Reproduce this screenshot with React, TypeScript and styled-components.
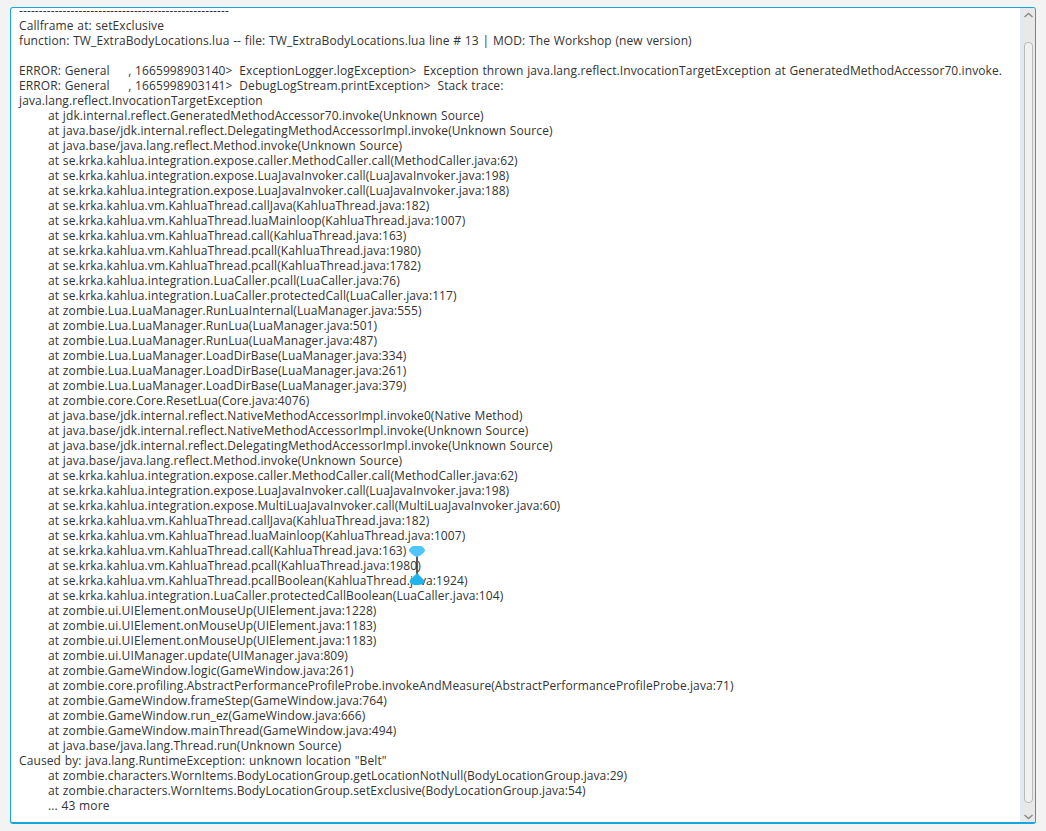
import styled, { createGlobalStyle } from "styled-components";

const GlobalStyle = createGlobalStyle`
  html, body {
    margin: 0;
    padding: 0;
    background: #f3f3f3;
  }
`;

const Page = styled.div`
  width: 1046px;
  height: 831px;
  padding: 7px 10px 7px 10px;
  box-sizing: border-box;
  overflow: hidden;
`;

const Panel = styled.div`
  position: relative;
  display: flex;
  height: 100%;
  box-sizing: border-box;
  border: 1px solid #16a5dc;
  border-bottom-width: 2px;
  border-radius: 3px;
  background: #fff;
  overflow: hidden;
`;

const LogArea = styled.div`
  flex: 1;
  min-width: 0;
  overflow: hidden;
  padding: 0 0 0 8px;
  border-right: 2px solid #d8eef8;
  font-family: "Open Sans", "Noto Sans", sans-serif;
  font-size: 12px;
  letter-spacing: 0.1px;
  word-spacing: 0.5px;
  line-height: 15px;
  color: #333;
`;

const Line = styled.div<{ $indent?: boolean; $first?: boolean }>`
  height: 15px;
  white-space: pre;
  padding-left: ${(p) => (p.$indent ? "29px" : "0")};
  margin-top: ${(p) => (p.$first ? "-5px" : "0")};
`;

const Gt = styled.span`
  margin-right: 3px;
`;

const ScrollBar = styled.div`
  width: 13px;
  flex-shrink: 0;
  display: flex;
  flex-direction: column;
  align-items: center;
  background: #e8e8e8;
`;

const Arrow = styled.svg<{ $height: number }>`
  width: 13px;
  height: ${(p) => p.$height}px;
  flex-shrink: 0;
`;

const Thumb = styled.div`
  flex: 1;
  width: 9px;
  box-sizing: border-box;
  border: 1px solid #b9b9b9;
  border-radius: 4px;
  background: #f1f1f1;
`;

const Handle = styled.svg`
  position: absolute;
  left: 396px;
  top: 537px;
  width: 20px;
  height: 44px;
`;

const lines: [string, boolean?][] = [
  ["-----------------------------------------------------"],
  ["Callframe at: setExclusive"],
  ["function: TW_ExtraBodyLocations.lua -- file: TW_ExtraBodyLocations.lua line # 13 | MOD: The Workshop (new version)"],
  [""],
  ["ERROR: General     , 1665998903140> ExceptionLogger.logException> Exception thrown java.lang.reflect.InvocationTargetException at GeneratedMethodAccessor70.invoke."],
  ["ERROR: General     , 1665998903141> DebugLogStream.printException> Stack trace:"],
  ["java.lang.reflect.InvocationTargetException"],
  ["at jdk.internal.reflect.GeneratedMethodAccessor70.invoke(Unknown Source)", true],
  ["at java.base/jdk.internal.reflect.DelegatingMethodAccessorImpl.invoke(Unknown Source)", true],
  ["at java.base/java.lang.reflect.Method.invoke(Unknown Source)", true],
  ["at se.krka.kahlua.integration.expose.caller.MethodCaller.call(MethodCaller.java:62)", true],
  ["at se.krka.kahlua.integration.expose.LuaJavaInvoker.call(LuaJavaInvoker.java:198)", true],
  ["at se.krka.kahlua.integration.expose.LuaJavaInvoker.call(LuaJavaInvoker.java:188)", true],
  ["at se.krka.kahlua.vm.KahluaThread.callJava(KahluaThread.java:182)", true],
  ["at se.krka.kahlua.vm.KahluaThread.luaMainloop(KahluaThread.java:1007)", true],
  ["at se.krka.kahlua.vm.KahluaThread.call(KahluaThread.java:163)", true],
  ["at se.krka.kahlua.vm.KahluaThread.pcall(KahluaThread.java:1980)", true],
  ["at se.krka.kahlua.vm.KahluaThread.pcall(KahluaThread.java:1782)", true],
  ["at se.krka.kahlua.integration.LuaCaller.pcall(LuaCaller.java:76)", true],
  ["at se.krka.kahlua.integration.LuaCaller.protectedCall(LuaCaller.java:117)", true],
  ["at zombie.Lua.LuaManager.RunLuaInternal(LuaManager.java:555)", true],
  ["at zombie.Lua.LuaManager.RunLua(LuaManager.java:501)", true],
  ["at zombie.Lua.LuaManager.RunLua(LuaManager.java:487)", true],
  ["at zombie.Lua.LuaManager.LoadDirBase(LuaManager.java:334)", true],
  ["at zombie.Lua.LuaManager.LoadDirBase(LuaManager.java:261)", true],
  ["at zombie.Lua.LuaManager.LoadDirBase(LuaManager.java:379)", true],
  ["at zombie.core.Core.ResetLua(Core.java:4076)", true],
  ["at java.base/jdk.internal.reflect.NativeMethodAccessorImpl.invoke0(Native Method)", true],
  ["at java.base/jdk.internal.reflect.NativeMethodAccessorImpl.invoke(Unknown Source)", true],
  ["at java.base/jdk.internal.reflect.DelegatingMethodAccessorImpl.invoke(Unknown Source)", true],
  ["at java.base/java.lang.reflect.Method.invoke(Unknown Source)", true],
  ["at se.krka.kahlua.integration.expose.caller.MethodCaller.call(MethodCaller.java:62)", true],
  ["at se.krka.kahlua.integration.expose.LuaJavaInvoker.call(LuaJavaInvoker.java:198)", true],
  ["at se.krka.kahlua.integration.expose.MultiLuaJavaInvoker.call(MultiLuaJavaInvoker.java:60)", true],
  ["at se.krka.kahlua.vm.KahluaThread.callJava(KahluaThread.java:182)", true],
  ["at se.krka.kahlua.vm.KahluaThread.luaMainloop(KahluaThread.java:1007)", true],
  ["at se.krka.kahlua.vm.KahluaThread.call(KahluaThread.java:163)", true],
  ["at se.krka.kahlua.vm.KahluaThread.pcall(KahluaThread.java:1980)", true],
  ["at se.krka.kahlua.vm.KahluaThread.pcallBoolean(KahluaThread.java:1924)", true],
  ["at se.krka.kahlua.integration.LuaCaller.protectedCallBoolean(LuaCaller.java:104)", true],
  ["at zombie.ui.UIElement.onMouseUp(UIElement.java:1228)", true],
  ["at zombie.ui.UIElement.onMouseUp(UIElement.java:1183)", true],
  ["at zombie.ui.UIElement.onMouseUp(UIElement.java:1183)", true],
  ["at zombie.ui.UIManager.update(UIManager.java:809)", true],
  ["at zombie.GameWindow.logic(GameWindow.java:261)", true],
  ["at zombie.core.profiling.AbstractPerformanceProfileProbe.invokeAndMeasure(AbstractPerformanceProfileProbe.java:71)", true],
  ["at zombie.GameWindow.frameStep(GameWindow.java:764)", true],
  ["at zombie.GameWindow.run_ez(GameWindow.java:666)", true],
  ["at zombie.GameWindow.mainThread(GameWindow.java:494)", true],
  ["at java.base/java.lang.Thread.run(Unknown Source)", true],
  ['Caused by: java.lang.RuntimeException: unknown location "Belt"'],
  ["at zombie.characters.WornItems.BodyLocationGroup.getLocationNotNull(BodyLocationGroup.java:29)", true],
  ["at zombie.characters.WornItems.BodyLocationGroup.setExclusive(BodyLocationGroup.java:54)", true],
  ["... 43 more", true],
];

// the ">" after a logger name sits a bit wider in the log font
const renderText = (text: string) => {
  const parts = text.split("> ");
  return parts.map((part, i) =>
    i < parts.length - 1 ? <Gt key={i}>{part + ">"}</Gt> : part
  ).flatMap((node, i) => (i < parts.length - 1 ? [node, " "] : [node]));
};

const App = () => {
  return (
    <>
      <GlobalStyle />
      <Page>
        <Panel>
          <LogArea>
            {lines.map(([text, indent], i) => (
              <Line key={i} $indent={indent} $first={i === 0}>
                {renderText(text)}
              </Line>
            ))}
          </LogArea>
          <ScrollBar>
            <Arrow $height={34} viewBox="0 0 13 34">
              <path d="M2.5 9 L6.5 5.5 L10.5 9" fill="none" stroke="#8a8a8a" strokeWidth="1.4" />
            </Arrow>
            <Thumb />
            <Arrow $height={19} viewBox="0 0 13 19">
              <path d="M2.5 12 L6.5 15.5 L10.5 12" fill="none" stroke="#8a8a8a" strokeWidth="1.4" />
            </Arrow>
          </ScrollBar>
          <Handle viewBox="0 0 20 44">
            <path d="M10 11 V33" stroke="#222" strokeWidth="1.5" />
            <path d="M6 1 H14 Q18 3 18 6 Q14 11 10 12 Q6 11 2 6 Q2 3 6 1 Z" fill="#4cc6fb" />
            <path d="M10 28 L17 35 Q18 37 16 39 Q13 40 10 40 Q7 40 4 39 Q2 37 3 35 Z" fill="#1fb4ee" />
          </Handle>
        </Panel>
      </Page>
    </>
  );
};

export default App;
